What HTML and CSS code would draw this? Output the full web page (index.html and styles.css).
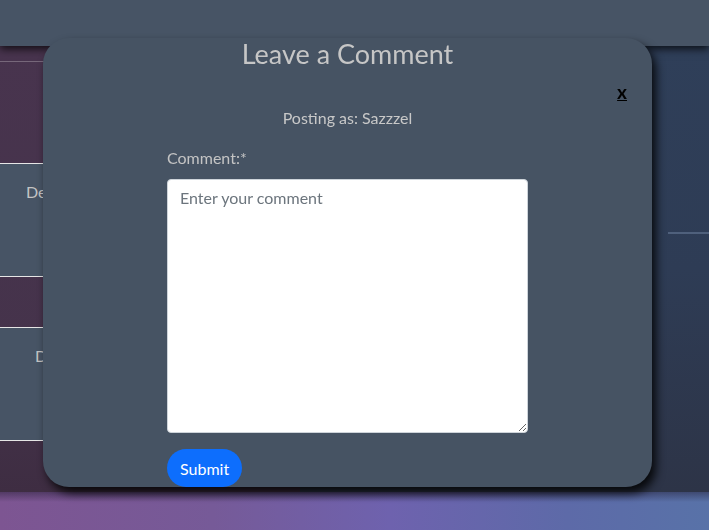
FILE: index.html
```html
<!DOCTYPE html>
<html lang="en">
<head>
<meta charset="utf-8">
<title>Leave a Comment</title>
<link rel="stylesheet" href="styles.css">
</head>
<body>
<header class="topbar"></header>
<main class="page">
  <section class="left-col">
    <div class="gap-block first"></div>
    <article class="card"><p class="card-text">Description</p></article>
    <div class="gap-block"></div>
    <article class="card"><p class="card-text indent">Details</p></article>
  </section>
  <section class="right-col">
    <div class="panel"></div>
    <div class="panel-rule"></div>
    <div class="panel lower"></div>
  </section>
</main>
<footer class="footer-band"></footer>

<div class="modal">
  <h2 class="modal-title">Leave a Comment</h2>
  <div class="close-row"><a class="close" href="#">x</a></div>
  <p class="posting">Posting as: Sazzzel</p>
  <form class="comment-form">
    <label class="field-label" for="comment">Comment:*</label>
    <textarea id="comment" class="comment-box" placeholder="Enter your comment"></textarea>
    <button type="button" class="submit">Submit</button>
  </form>
</div>
</body>
</html>
```
FILE: styles.css
```css
* { box-sizing: border-box; }
html, body { margin: 0; height: 100%; }
body {
  font-family: Lato, "Open Sans", sans-serif;
  background: #3d2d40;
  overflow: hidden;
  display: flex;
  flex-direction: column;
}
.topbar {
  height: 46px;
  background: #475465;
  box-shadow: 0 3px 8px rgba(0,0,0,.75);
  position: relative;
  z-index: 2;
  flex: none;
}
.page {
  flex: 1;
  display: grid;
  grid-template-columns: 300px 1fr;
}
.left-col {
  background: linear-gradient(#48344e, #45334b 70%, #3e2d42);
  display: flex;
  flex-direction: column;
}
.gap-block { height: 50px; }
.gap-block.first { height: 117px; }
.gap-block.first::before {
  content: "";
  display: block;
  margin-top: 15px;
  height: 1px;
  background: rgba(255,255,255,.25);
}
.card {
  height: 114px;
  background: #475465;
  border-top: 1px solid #e6e6e6;
  border-bottom: 1px solid #e6e6e6;
  padding: 18px 0 0 26px;
}
.card-text {
  margin: 0;
  font-size: 16px;
  color: #c4c4c4;
}
.card-text.indent { padding-left: 9px; }
.right-col {
  background: linear-gradient(#2f3f59, #2e3c55 50%, #2d3447);
  display: flex;
  flex-direction: column;
}
.panel { height: 186px; }
.panel-rule {
  height: 2px;
  width: 41px;
  margin-left: auto;
  background: rgba(120,140,170,.45);
}
.footer-band {
  height: 38px;
  flex: none;
  background:
    linear-gradient(rgba(30,25,45,.45), rgba(30,25,45,0) 10px),
    linear-gradient(90deg, #7d5592 0%, #765a98 30%, #6e62ae 55%, #5d6aa8 80%, #5872a8 100%);
}

.modal {
  position: fixed;
  left: 43px;
  top: 38px;
  width: 609px;
  height: 449px;
  background: #465363;
  border-radius: 26px;
  box-shadow: 4px 6px 10px rgba(0,0,0,.85);
  overflow: hidden;
  z-index: 5;
  color: #c8c8c8;
}
.modal-title {
  margin: 0;
  text-align: center;
  font-weight: 400;
  font-size: 27px;
  line-height: 32px;
  color: #c6c6c6;
}
.close-row {
  display: flex;
  justify-content: flex-end;
  padding: 10px 25px 0 0;
  height: 38px;
}
.close {
  color: #000;
  font-weight: 700;
  font-size: 19px;
  line-height: 24px;
  text-decoration: underline;
}
.posting {
  margin: 0;
  text-align: center;
  font-size: 16px;
  line-height: 20px;
}
.comment-form {
  width: 361px;
  margin: 20px auto 0;
  display: flex;
  flex-direction: column;
  align-items: flex-start;
}
.field-label {
  font-size: 16px;
  line-height: 20px;
  color: #c4c4c4;
}
.comment-box {
  margin-top: 11px;
  width: 361px;
  height: 254px;
  border: 1px solid #ced4da;
  border-radius: 4px;
  padding: 8px 12px;
  font-family: inherit;
  font-size: 16px;
  background: #fff;
  color: #333;
}
.comment-box::placeholder { color: #6c757d; }
.submit {
  margin-top: 16px;
  height: 38px;
  padding: 0 13px;
  border: 0;
  border-radius: 19px;
  background: #0d6efd;
  color: #fff;
  font-family: inherit;
  font-size: 16px;
}
```
